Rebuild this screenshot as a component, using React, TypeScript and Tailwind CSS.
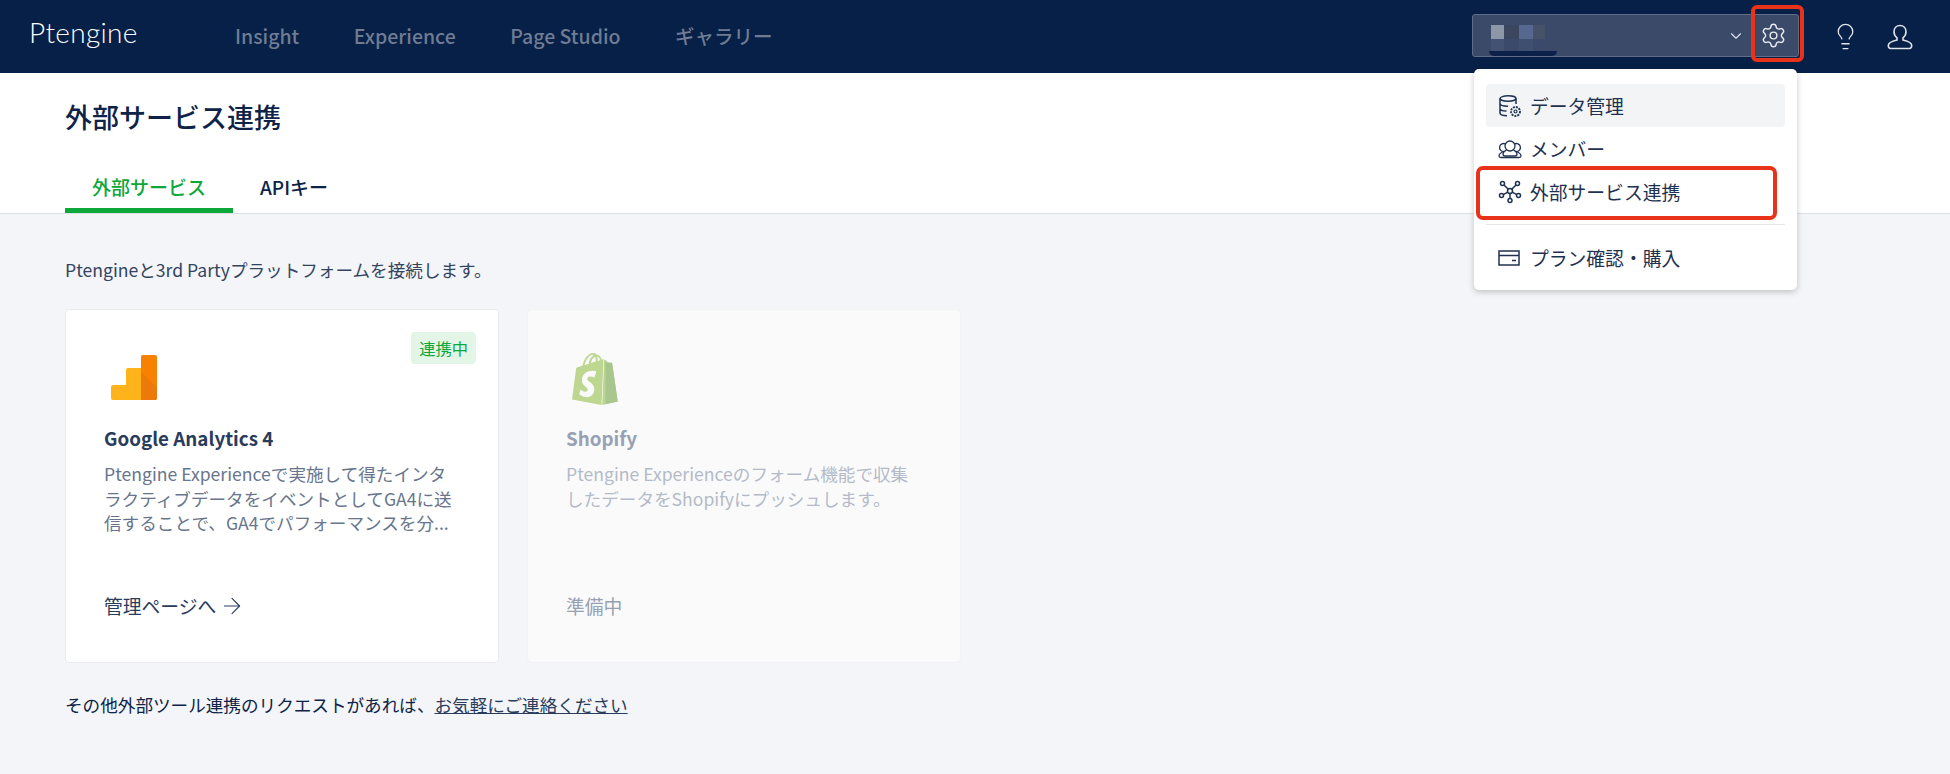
import { ArrowRight, ChevronDown, Lightbulb, Settings } from "lucide-react";
import { SiShopify } from "react-icons/si";

const font = { fontFamily: '"Noto Sans CJK JP", sans-serif' };

function DataIcon() {
  return (
    <svg width="24" height="24" viewBox="0 0 24 24" fill="none" stroke="#1f3150" strokeWidth="1.5">
      <ellipse cx="10" cy="4.5" rx="8" ry="2.7" />
      <path d="M2 4.5V19c0 1.5 3 2.7 7 2.7M18 4.5V10M2 9.500c0 1.500 3 2.700 8 2.700M2 14.500c0 1.300 2.500 2.500 6.500 2.600" />
      <circle cx="17.500" cy="17.500" r="4.500" strokeWidth="1.800" strokeDasharray="2 1" />
      <circle cx="17.500" cy="17.500" r="1.500" strokeWidth="1.200" />
    </svg>
  );
}

function MemberIcon() {
  return (
    <svg width="24" height="20" viewBox="0 0 24 20" fill="none" stroke="#1f3150" strokeWidth="1.300">
      <circle cx="12" cy="7" r="5" />
      <path d="M7.500 5A4 4 0 1 0 5.800 12.500C3 13.500 1 15 1 17c0 1 1 1.500 2 1.500h18c1 0 2-.5 2-1.500 0-2-2-3.500-4.800-4.500A4 4 0 1 0 16.500 5" />
      <path d="M8.500 11c-2 1-3.500 2.500-3.500 4 0 1.500 1 2 2 2h10c1 0 2-.5 2-2 0-1.500-1.500-3-3.500-4" />
    </svg>
  );
}

function NetworkIcon() {
  return (
    <svg width="24" height="24" viewBox="0 0 24 24" fill="none" stroke="#1f3150" strokeWidth="1.500">
      <circle cx="12" cy="11" r="2.500" />
      <circle cx="4.500" cy="3.500" r="2" />
      <circle cx="19.500" cy="3.500" r="2" />
      <circle cx="3.500" cy="15.500" r="2" />
      <circle cx="20.500" cy="15.500" r="2" />
      <circle cx="12" cy="20.500" r="2" />
      <path d="M6 5l4.300 4.300M18 5l-4.300 4.300M5.300 14.700l4.500-2.500M18.700 14.700l-4.500-2.500M12 13.500v5" />
    </svg>
  );
}

function PlanIcon() {
  return (
    <svg width="22" height="16" viewBox="0 0 22 16" fill="none" stroke="#1f3150" strokeWidth="1.500">
      <rect x="1" y="1" width="20" height="14" />
      <path d="M1 5.500h20M14 10.500h4" />
    </svg>
  );
}

function UserIcon() {
  return (
    <svg width="26" height="26" viewBox="0 0 26 26" fill="none" stroke="#dfe3ea" strokeWidth="1.600">
      <path d="M13 1.500c-3.500 0-6 2.700-6 6.300 0 2.700 1.200 4.700 3 6v2.200c-3.500.8-8.700 2.300-8.700 5.500 0 2 1 3 2.500 3h18.400c1.500 0 2.500-1 2.500-3 0-3.200-5.200-4.700-8.700-5.500v-2.200c1.800-1.300 3-3.300 3-6 0-3.600-2.500-6.300-6-6.300z" />
    </svg>
  );
}

function AnalyticsLogo() {
  return (
    <svg width="46" height="45" viewBox="0 0 46 45" className="mb-[5px] ml-[7px]">
      <path d="M2 30h13V15a2 2 0 0 1 2-2h13v32H2a2 2 0 0 1-2-2V32a2 2 0 0 1 2-2z" fill="#ffb31a" />
      <path d="M30 2a2 2 0 0 1 2-2h12a2 2 0 0 1 2 2v41a2 2 0 0 1-2 2H30z" fill="#f98100" />
      <path d="M30 17l16 16v10a2 2 0 0 1-2 2H30z" fill="#ec7a0a" />
    </svg>
  );
}

function ShopifyLogo() {
  return (
    <div className="relative ml-[5px] h-[52px] w-[48px]">
      <SiShopify size={52} color="#bdd690" className="-ml-[2px]" />
      <SiShopify size={52} color="#a9c68f" className="absolute left-[-2px] top-0 [clip-path:inset(0_0_0_70%)]" />
    </div>
  );
}

const navItems = ["Insight", "Experience", "Page Studio", "ギャラリー"];

function Header() {
  return (
    <header className="relative flex h-[73px] items-center bg-[#062047] pl-[29px] pr-[37px]">
      <span
        className="mb-[9px] w-[206px] text-[28px] font-light tracking-[0.3px] text-white"
        style={{ fontFamily: '"Lato", sans-serif' }}
      >
        Ptengine
      </span>
      <nav className="mb-[2px] flex gap-[54.500px] text-[19.500px] font-medium text-[#6f7c93]">
        {navItems.map((n) => (
          <span key={n}>{n}</span>
        ))}
      </nav>
      <div className="ml-auto flex items-center">
        <div className="relative mb-[2px] flex h-[43px] w-[327px] items-center rounded-[3px] border border-[#5f6d89] bg-[#3a4a68] pr-[11px]">
          <div className="absolute left-[18px] top-[10px] grid grid-cols-[13px_15px_14px_12px]">
            <span className="h-[14px] bg-[#8c97a8]" />
            <span className="h-[14px] bg-[#3c475f]" />
            <span className="h-[14px] bg-[#56688f]" />
            <span className="h-[14px] bg-[#465269]" />
            <span className="h-[13px] bg-[#435273]" />
            <span className="h-[13px] bg-[#3b4a6a]" />
            <span className="h-[13px] bg-[#3f4f70]" />
            <span className="h-[13px] bg-[#3b4a6a]" />
          </div>
          <span className="absolute bottom-0 left-[16px] h-[5px] w-[68px] rounded-b-[8px] bg-[#0b2149]" />
          <ChevronDown size={18} strokeWidth={1.5} color="#dfe3ea" className="ml-auto mr-[15px]" />
          <Settings size={27} strokeWidth={1.3} color="#e6e9ef" />
        </div>
        <Lightbulb size={29} strokeWidth={1.1} color="#dfe3ea" className="ml-[32px]" />
        <span className="ml-[27px] flex">
          <UserIcon />
        </span>
      </div>
    </header>
  );
}

function MenuRow({ icon, label, active }: { icon: React.ReactNode; label: string; active?: boolean }) {
  return (
    <div className={`flex h-[43px] items-center rounded-[4px] pl-[12px] ${active ? "bg-[#f3f4f6]" : ""}`}>
      <span className="flex w-[32px] items-center">{icon}</span>
      <span className="mt-[2px] text-[18.800px] text-[#1f3150]">{label}</span>
    </div>
  );
}

function Menu() {
  return (
    <div className="absolute left-[1474px] top-[69px] z-10 h-[221px] w-[323px] rounded-[5px] bg-white px-[12px] pt-[15px] shadow-[0_2px_6px_rgba(0,0,0,0.22)]">
      <MenuRow active icon={<DataIcon />} label="データ管理" />
      <MenuRow icon={<MemberIcon />} label="メンバー" />
      <MenuRow icon={<NetworkIcon />} label="外部サービス連携" />
      <div className="mb-[11px] mt-[11px] h-px bg-[#e5e7eb]" />
      <MenuRow icon={<PlanIcon />} label="プラン確認・購入" />
    </div>
  );
}

function PageHead() {
  return (
    <div className="border-b border-[#dcdfe4] bg-white pl-[65px]">
      <h1 className="pb-[34px] pt-[23px] text-[27px] font-medium leading-[42px] text-[#0e2347]">外部サービス連携</h1>
      <div className="flex text-[19px] font-medium leading-[26px]">
        <span className="border-b-[5px] border-[#0ea73a] px-[27px] pb-[8px] pt-[2px] text-[#0ea73a]">外部サービス</span>
        <span className="px-[27px] pt-[2px] text-[#0e2347]">APIキー</span>
      </div>
    </div>
  );
}

function Card({
  logo,
  title,
  desc,
  footer,
  badge,
  muted,
}: {
  logo: React.ReactNode;
  title: string;
  desc: string;
  footer: React.ReactNode;
  badge?: string;
  muted?: boolean;
}) {
  return (
    <article
      className={`relative flex h-[354px] w-[434px] flex-col rounded-[4px] border pl-[38px] pr-[41px] ${
        muted ? "border-[#f1f2f4] bg-[#fafafb]" : "border-[#e9ebef] bg-white"
      }`}
    >
      {badge && (
        <span className="absolute right-[22px] top-[22px] rounded-[4px] bg-[#e3f5e7] px-[8px] py-[5px] text-[16.300px] leading-[22px] text-[#0ea73a]">
          {badge}
        </span>
      )}
      <div className="mt-[41px] flex h-[54px] items-end">{logo}</div>
      <h2 className={`mt-[20px] text-[18.800px] font-bold leading-[26px] ${muted ? "text-[#98a1b3]" : "text-[#2a3c5c]"}`}>{title}</h2>
      <p className={`mt-[11px] h-[75px] text-[17.600px] leading-[24.500px] ${muted ? "text-[#b4bac7]" : "text-[#68758d]"}`}>{desc}</p>
      <div className={`mt-[56px] flex items-center text-[18.800px] leading-[26px] ${muted ? "text-[#98a1b3]" : "text-[#2a3c5c]"}`}>{footer}</div>
    </article>
  );
}

function Body() {
  return (
    <main className="px-[65px] pt-[43px]">
      <p className="text-[17.600px] leading-[26px] text-[#33445f]">Ptengineと3rd Partyプラットフォームを接続します。</p>
      <div className="mt-[26px] flex gap-[28px]">
        <Card
          badge="連携中"
          logo={<AnalyticsLogo />}
          title="Google Analytics 4"
          desc="Ptengine Experienceで実施して得たインタラクティブデータをイベントとしてGA4に送信することで、GA4でパフォーマンスを分..."
          footer={
            <>
              管理ページへ
              <ArrowRight size={26} strokeWidth={1} className="ml-[3px]" />
            </>
          }
        />
        <Card
          muted
          logo={<ShopifyLogo />}
          title="Shopify"
          desc="Ptengine Experienceのフォーム機能で収集したデータをShopifyにプッシュします。"
          footer="準備中"
        />
      </div>
      <p className="mt-[29px] text-[17.600px] leading-[26px] text-[#0e2347]">
        その他外部ツール連携のリクエストがあれば、<span className="text-[#2a3c5c] underline">お気軽にご連絡ください</span>
      </p>
    </main>
  );
}

export default function App() {
  return (
    <div className="relative h-[774px] w-[1950px] overflow-hidden bg-[#f3f5f8]" style={font}>
      <Header />
      <PageHead />
      <Body />
      <Menu />
      <div className="absolute left-[1751px] top-[5px] z-20 h-[57px] w-[53px] rounded-[6px] border-[4px] border-[#e8321a]" />
      <div className="absolute left-[1476px] top-[166px] z-20 h-[54px] w-[301px] rounded-[7px] border-[4px] border-[#e8321a]" />
    </div>
  );
}
